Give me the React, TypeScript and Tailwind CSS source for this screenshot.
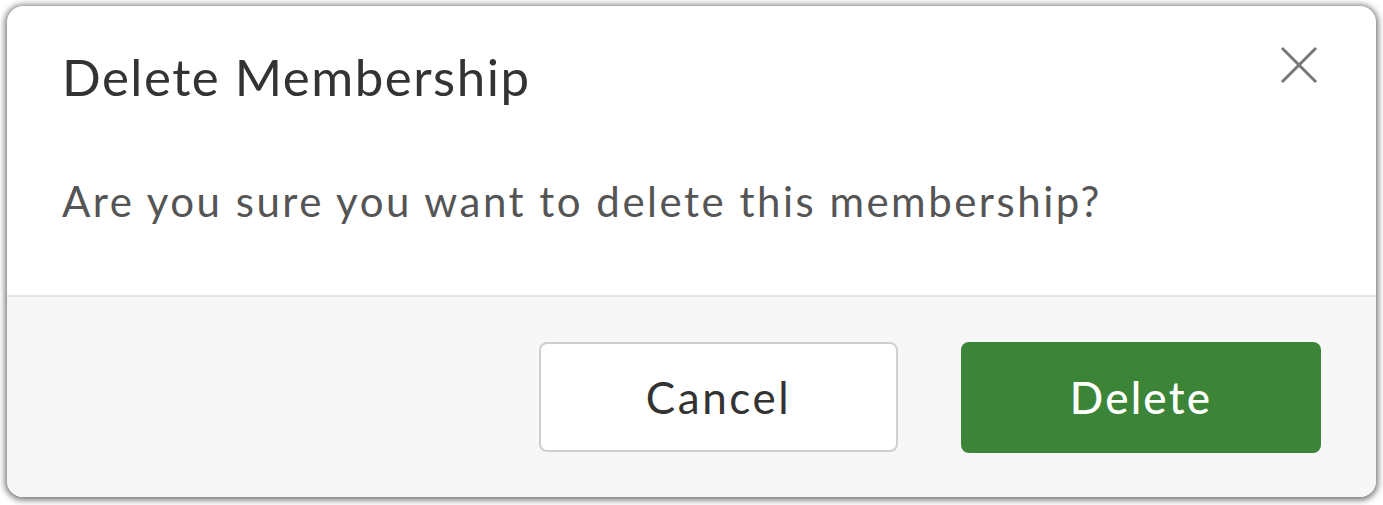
export default function App() {
  return (
    <div className="w-[1383px] h-[505px] bg-white pt-[6px] px-[7px] font-['Lato','Open_Sans',sans-serif]">
      <div className="w-[1369px] h-[491px] flex flex-col rounded-[16px] overflow-hidden bg-white shadow-[0_1px_6px_2px_rgba(0,0,0,0.55)]">
        {/* Header + body */}
        <div className="h-[291px] shrink-0 border-b-2 border-[#e6e6e6] pl-[55px] pr-[58px] relative">
          <h2 className="pt-[41px] text-[51px] leading-[60px] tracking-[1.5px] text-[#333333] font-normal">
            Delete Membership
          </h2>
          <button className="absolute right-[52px] top-[34px] w-[50px] h-[50px] flex items-center justify-center">
            <svg width="38" height="38" viewBox="0 0 38 38">
              <path d="M2 2 L36 36 M36 2 L2 36" stroke="#777777" strokeWidth="3" fill="none" />
            </svg>
          </button>
          <p className="mt-[70px] text-[42px] leading-[48px] tracking-[2.5px] text-[#555555]">
            Are you sure you want to delete this membership?
          </p>
        </div>

        {/* Footer */}
        <div className="flex-1 bg-[#f7f7f7] flex items-center justify-end gap-[63px] pr-[55px]">
          <button className="w-[359px] h-[110px] rounded-[8px] border-2 border-[#cfcfcf] bg-white text-[44px] tracking-[2.6px] text-[#333333]">
            Cancel
          </button>
          <button className="w-[360px] h-[111px] rounded-[8px] bg-[#3c8438] text-[44px] tracking-[2.2px] text-white font-medium">
            Delete
          </button>
        </div>
      </div>
    </div>
  );
}
